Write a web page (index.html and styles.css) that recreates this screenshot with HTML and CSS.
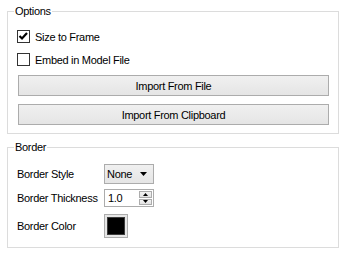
FILE: index.html
```html
<!DOCTYPE html>
<html>
<head>
<meta charset="utf-8">
<link rel="stylesheet" href="styles.css">
</head>
<body>
<div class="panel">
  <fieldset class="group options">
    <legend>Options</legend>
    <div class="check-row">
      <span class="checkbox">
        <svg width="11" height="11" viewBox="0 0 11 11"><path d="M1.5 5 L4 7.5 L9 2" fill="none" stroke="#000" stroke-width="2.2"/></svg>
      </span>
      <span>Size to Frame</span>
    </div>
    <div class="check-row">
      <span class="checkbox"></span>
      <span>Embed in Model File</span>
    </div>
    <button class="btn first">Import From File</button>
    <button class="btn">Import From Clipboard</button>
  </fieldset>
  <fieldset class="group border">
    <legend>Border</legend>
    <div class="form-row r1">
      <span class="label">Border Style</span>
      <div class="combo">
        <span>None</span>
        <svg width="7" height="4" viewBox="0 0 7 4"><path d="M0 0 H7 L3.5 4 Z" fill="#000"/></svg>
      </div>
    </div>
    <div class="form-row r2">
      <span class="label">Border Thickness</span>
      <div class="spin">
        <span class="spin-value">1.0</span>
        <div class="spin-btns">
          <span class="spin-btn"><svg width="5" height="3" viewBox="0 0 5 3"><path d="M0 3 H5 L2.5 0 Z" fill="#000"/></svg></span>
          <span class="spin-btn"><svg width="5" height="3" viewBox="0 0 5 3"><path d="M0 0 H5 L2.5 3 Z" fill="#000"/></svg></span>
        </div>
      </div>
    </div>
    <div class="form-row r3">
      <span class="label">Border Color</span>
      <div class="swatch"><span class="swatch-fill"></span></div>
    </div>
  </fieldset>
</div>
</body>
</html>
```

FILE: styles.css
```css
html, body {
  margin: 0;
  padding: 0;
  background: #ffffff;
}
body {
  font-family: "Liberation Sans", Arial, sans-serif;
  font-size: 11px;
  letter-spacing: -0.3px;
  color: #000;
}
.panel {
  padding: 5px 8px 0 7px;
  display: flex;
  flex-direction: column;
}
.group {
  margin: 0;
  border: 1px solid #dcdcdc;
  min-width: 0;
}
.group legend {
  padding: 0 1px;
  margin-left: -3px;
  line-height: 13px;
  height: 13px;
}
.options {
  padding: 7px 9px 8px 9px;
  display: flex;
  flex-direction: column;
}
.check-row {
  height: 23px;
  display: flex;
  align-items: center;
  gap: 5px;
}
.checkbox {
  box-sizing: border-box;
  width: 13px;
  height: 13px;
  border: 1px solid #333;
  background: #fff;
  display: flex;
  align-items: center;
  justify-content: center;
}
.checkbox svg { display: block; }
.btn {
  font: inherit;
  letter-spacing: inherit;
  color: #000;
  height: 21px;
  margin: 0 0 0 1px;
  padding: 0;
  border: 1px solid #acacac;
  background: linear-gradient(#f0f0f0, #e5e5e5);
  border-radius: 0;
}
.btn.first { margin-top: 4px; margin-bottom: 8px; }
.border {
  margin-top: 7px;
  padding: 10px 9px 9px 9px;
  display: flex;
  flex-direction: column;
}
.form-row {
  display: flex;
  align-items: center;
}
.r1 { height: 20px; }
.r2 { height: 18px; margin-top: 5px; }
.r3 { height: 24px; margin-top: 7px; }
.label { width: 87px; }
.combo {
  box-sizing: border-box;
  width: 50px;
  height: 20px;
  border: 1px solid #acacac;
  background: linear-gradient(#f0f0f0, #e5e5e5);
  display: flex;
  align-items: center;
  justify-content: space-between;
  padding: 0 6px 0 2px;
}
.combo svg { display: block; }
.spin {
  box-sizing: border-box;
  width: 50px;
  height: 18px;
  border: 1px solid #acacac;
  background: #fff;
  display: flex;
  align-items: stretch;
}
.spin-value {
  flex: 1;
  display: flex;
  align-items: center;
  padding-left: 3px;
}
.spin-btns {
  width: 13px;
  display: flex;
  flex-direction: column;
  padding: 1px 1px 1px 0;
  gap: 1px;
}
.spin-btn {
  flex: 1;
  box-sizing: border-box;
  border: 1px solid #acacac;
  background: linear-gradient(#f2f2f2, #e3e3e3);
  display: flex;
  align-items: center;
  justify-content: center;
}
.spin-btn svg { display: block; }
.swatch {
  box-sizing: border-box;
  width: 24px;
  height: 24px;
  border: 1px solid #acacac;
  background: #e6e6e6;
  padding: 2px;
  display: flex;
}
.swatch-fill {
  flex: 1;
  background: #000;
  border: 1px solid #3c3c3c;
}
```
